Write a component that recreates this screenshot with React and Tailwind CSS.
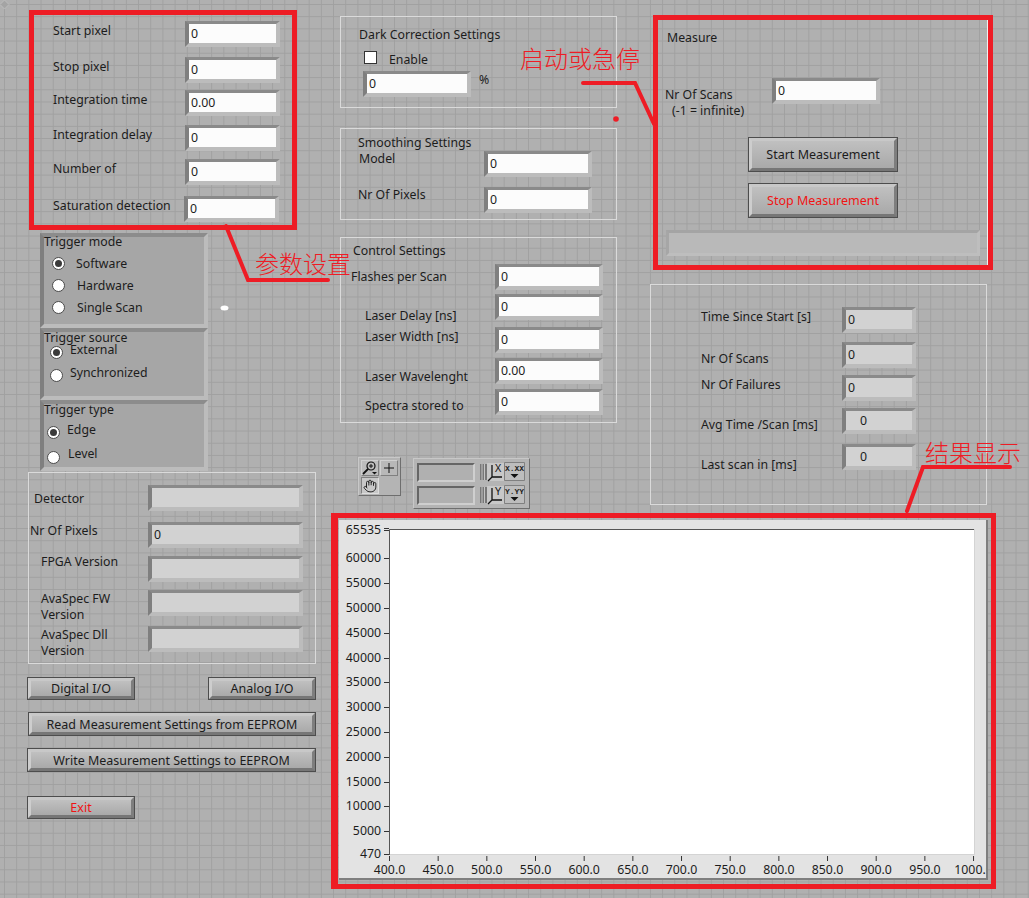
import { Hand } from 'lucide-react';

const text = "text-[12.3px] leading-[16px] text-[#1c1c1c] whitespace-nowrap";

// recessed LabVIEW numeric control, white or grey inside
const Numeric = ({ value, className = '', inner = 'w-[100px]', indicator = false, valueClass = 'pl-[2px]' }) => (
  <div className={`shrink-0 box-content border-t-[3px] border-l-[4px] border-r-[4px] border-b-[4px] border-t-[#8a8a8a] border-l-[#7f7f7f] border-r-[#bcbcbc] border-b-[#bcbcbc] ${className}`}>
    <div className={`h-[19px] ${inner} ${indicator ? 'bg-[#d2d2d2]' : 'bg-[#fcfcfc]'} ${text} ${valueClass} leading-[19px]`}>{value}</div>
  </div>
);

const Field = ({ label, labelClass, rowClass, ...rest }) => (
  <div className={`flex items-start ${rowClass}`}>
    <div className={`${text} shrink-0 ${labelClass}`}>{label}</div>
    <Numeric {...rest} />
  </div>
);

const Radio = ({ on }) => (
  <span className="shrink-0 w-[13px] h-[13px] rounded-full bg-white border-[1.5px] border-[#4a4a4a] flex items-center justify-center">
    {on && <span className="w-[7px] h-[7px] rounded-full bg-[#3a3a3a]" />}
  </span>
);

const RadioRow = ({ on, label, rowClass, labelClass }) => (
  <div className={`flex items-center h-[22px] ${rowClass}`}>
    <Radio on={on} />
    <span className={`${text} ${labelClass}`}>{label}</span>
  </div>
);

const LvButton = ({ children, className = '', red = false }) => (
  <button className={`block box-border border border-[#4d4d4d] bg-[#b4b4b4] ${className}`}>
    <span className={`flex h-full items-center justify-center box-border pt-[2px] border-t-[3px] border-l-[3px] border-r-[3px] border-b-[3px] border-t-[#c8c8c8] border-l-[#cdcdcd] border-r-[#7e7e7e] border-b-[#767676] bg-[linear-gradient(to_bottom,#c0c0c0,#a9a9a9)] text-[12.5px] whitespace-nowrap ${red ? 'text-[#f01414]' : 'text-[#1c1c1c]'}`}>
      {children}
    </span>
  </button>
);

const TriggerPanel = ({ className, children }) => (
  <div className={`ml-[40px] w-[168px] box-border border-[4px] border-t-[#8c8c8c] border-l-[#7f7f7f] border-r-[#bcbcbc] border-b-[#bcbcbc] bg-[#a6a6a6] ${className}`}>
    {children}
  </div>
);

const LegendRow = ({ axis, format, className = '' }) => (
  <div className={`flex items-center ${className}`}>
    <div className="w-[60px] h-[19px] box-border border-2 border-t-[#666666] border-l-[#666666] border-r-[#cfcfcf] border-b-[#cfcfcf] bg-[#b0b0b0]" />
    <svg width="49" height="20" viewBox="0 0 49 20" className="ml-[5px] shrink-0">
      <path d="M0 2h7v16H0z" fill="#777" />
      <path d="M2 2v16M4.500 2v16" stroke="#c4c4c4" />
      <path d="M7 1h17v18H7z" fill="#c8c8c8" />
      <path d="M12 3v12H22M12 15l-4 4" stroke="#111" strokeWidth="1.300" fill="none" />
      <text x="18" y="10" textAnchor="middle" fontFamily="Liberation Sans, sans-serif" fontSize="10" fill="#111">{axis}</text>
      <path d="M24.500 0.500h20v18h-20z" fill="#bdbdbd" stroke="#808080" strokeWidth="1" />
      <text x="34.500" y="9" textAnchor="middle" fontFamily="Liberation Mono, monospace" fontSize="8" fontWeight="700" fill="#222">{format}</text>
      <path d="M30.500 12h8l-4 4z" fill="#111" />
    </svg>
  </div>
);

const yTicks = [
  ['65535', 10], ['60000', 38], ['55000', 63], ['50000', 88], ['45000', 113], ['40000', 138], ['35000', 162],
  ['30000', 187], ['25000', 212], ['20000', 237], ['15000', 262], ['10000', 286], ['5000', 311], ['470', 334],
];
const xTicks = ['400.0', '450.0', '500.0', '550.0', '600.0', '650.0', '700.0', '750.0', '800.0', '850.0', '900.0', '950.0', '1000.0'];

const Chart = () => (
  <svg width="648" height="360" viewBox="0 0 648 360" className="block font-['Noto_Sans']">
    <rect x="50.500" y="9.500" width="585" height="325" fill="#ffffff" stroke="#d4d4d4" />
    <path d="M50.500 9.500V335M50.500 9.500H635" stroke="#555555" fill="none" />
    {yTicks.map(([label, y]) => (
      <g key={label}>
        <text x="42" y={y + 4} textAnchor="end" fontSize="12.300" fill="#1c1c1c">{label}</text>
        <path d={`M45 ${y + 0.500}h5`} stroke="#333" />
      </g>
    ))}
    <path d="M45 8.500h5" stroke="#333" />
    {xTicks.map((label, i) => {
      const x = 50.5 + i * 48.67;
      return (
        <g key={label}>
          <path d={`M${x} 336v5`} stroke="#333" />
          <text x={x} y="354" textAnchor="middle" fontSize="12.300" fill="#1c1c1c">{label}</text>
        </g>
      );
    })}
  </svg>
);

const annotation = "absolute font-['Noto_Sans_CJK_SC'] font-light text-[24px] leading-[28px] text-[#ee1c25] whitespace-nowrap";

export default function App() {
  return (
    <div className="relative w-[1029px] h-[898px] overflow-hidden flex font-['Noto_Sans'] bg-[#b0b0b0] bg-[linear-gradient(to_right,#a0a0a0_1px,transparent_1px),linear-gradient(to_bottom,#a0a0a0_1px,transparent_1px)] bg-[size:12.2px_12.2px] bg-[position:4px_4px]">
      {/* left column */}
      <div className="w-[331px] shrink-0">
        <div className="pt-[21px] pl-[53px] h-[233px]">
          <Field label="Start pixel" value="0" rowClass="h-[36px]" labelClass="w-[132px] mt-[2px]" inner="w-[87px]" />
          <Field label="Stop pixel" value="0" rowClass="h-[33px]" labelClass="w-[132px] mt-[2px]" inner="w-[87px]" />
          <Field label="Integration time" value="0.00" rowClass="h-[35px]" labelClass="w-[132px] mt-[2px]" inner="w-[87px]" />
          <Field label="Integration delay" value="0" rowClass="h-[34px]" labelClass="w-[132px] mt-[2px]" inner="w-[87px]" />
          <Field label="Number of" value="0" rowClass="h-[37px]" labelClass="w-[132px] mt-[2px]" inner="w-[87px]" />
          <Field label="Saturation detection" value="0" rowClass="h-[26px]" labelClass="w-[131px] mt-[2px]" inner="w-[87px]" />
        </div>

        <TriggerPanel className="h-[95px]">
          <div className={`${text} -mt-[3px]`}>Trigger mode</div>
          <RadioRow on label="Software" rowClass="mt-[2px] pl-[8px]" labelClass="ml-[11px] mt-[2px]" />
          <RadioRow label="Hardware" rowClass="pl-[8px]" labelClass="ml-[12px] mt-[2px]" />
          <RadioRow label="Single Scan" rowClass="pl-[8px]" labelClass="ml-[12px] mt-[2px]" />
        </TriggerPanel>
        <TriggerPanel className="h-[72px]">
          <div className={`${text} -mt-[2px]`}>Trigger source</div>
          <RadioRow on label="External" rowClass="-mt-[5px] pl-[6px]" labelClass="ml-[7px] mb-[4px]" />
          <RadioRow label="Synchronized" rowClass="mt-[1px] pl-[6px]" labelClass="ml-[7px] mb-[4px]" />
        </TriggerPanel>
        <TriggerPanel className="h-[71px]">
          <div className={`${text} -mt-[2px]`}>Trigger type</div>
          <RadioRow on label="Edge" rowClass="mt-[3px] pl-[3px]" labelClass="ml-[7px] mb-[4px]" />
          <RadioRow label="Level" rowClass="mt-[3px] pl-[3px]" labelClass="ml-[8px] mb-[6px]" />
        </TriggerPanel>

        <div className="ml-[28px] mt-[1px] w-[288px] h-[192px] box-border border border-[#dadada] pt-[12px]">
          <Field label="Detector" value="" indicator rowClass="h-[37px]" labelClass="w-[119px] pl-[5px] mt-[6px]" inner="w-[147px]" />
          <Field label="Nr Of Pixels" value="0" indicator rowClass="h-[34px]" labelClass="w-[119px] pl-[1px] mt-[1px]" inner="w-[147px]" />
          <Field label="FPGA Version" value="" indicator rowClass="h-[34px]" labelClass="w-[119px] pl-[12px] -mt-[2px]" inner="w-[147px]" />
          <Field label={<>AvaSpec FW<br />Version</>} value="" indicator rowClass="h-[36px]" labelClass="w-[119px] pl-[12px] mt-[1px]" inner="w-[147px]" />
          <Field label={<>AvaSpec Dll<br />Version</>} value="" indicator rowClass="h-[26px]" labelClass="w-[119px] pl-[12px] mt-[1px]" inner="w-[147px]" />
        </div>

        <div className="mt-[13px] ml-[27px] w-[289px] flex justify-between">
          <LvButton className="w-[108px] h-[23px]">Digital I/O</LvButton>
          <LvButton className="w-[108px] h-[23px]">Analog I/O</LvButton>
        </div>
        <LvButton className="mt-[12px] ml-[28px] w-[288px] h-[24px]">Read Measurement Settings from EEPROM</LvButton>
        <LvButton className="mt-[12px] ml-[27px] w-[289px] h-[24px]">Write Measurement Settings to EEPROM</LvButton>
        <LvButton red className="mt-[24px] ml-[27px] w-[108px] h-[23px]">Exit</LvButton>
      </div>

      {/* middle, right and graph */}
      <div className="flex-1 min-w-0">
        <div className="flex h-[520px]">
          <div className="w-[319px] shrink-0 pl-[9px] pt-[16px]">
            <div className="w-[277px] h-[92px] box-border border border-[#dadada] pt-[10px]">
              <div className={`${text} ml-[18px]`}>Dark Correction Settings</div>
              <div className="flex items-start ml-[23px] mt-[8px] h-[17px]">
                <span className="w-[13px] h-[13px] box-border border border-[#333333] bg-white" />
                <span className={`${text} ml-[12px] mt-[1px]`}>Enable</span>
              </div>
              <div className="flex items-start ml-[22px] mt-[3px]">
                <Numeric value="0" />
                <span className={`${text} ml-[8px] mt-[1px]`}>%</span>
              </div>
            </div>
            <div className="mt-[20px] w-[277px] h-[92px] box-border border border-[#dadada] pt-[6px]">
              <div className={`${text} ml-[17px]`}>Smoothing Settings</div>
              <Field label="Model" value="0" rowClass="h-[36px]" labelClass="w-[143px] pl-[18px]" />
              <Field label="Nr Of Pixels" value="0" rowClass="h-[26px]" labelClass="w-[143px] pl-[17px]" />
            </div>
            <div className="mt-[17px] w-[277px] h-[186px] box-border border border-[#dadada] pt-[5px]">
              <div className={`${text} ml-[12px]`}>Control Settings</div>
              <Field label="Flashes per Scan" value="0" rowClass="h-[30px] mt-[5px]" labelClass="w-[154px] pl-[10px] mt-[5px]" />
              <Field label="Laser Delay [ns]" value="0" rowClass="h-[33px]" labelClass="w-[154px] pl-[24px] mt-[14px]" />
              <Field label="Laser Width [ns]" value="0" rowClass="h-[31px]" labelClass="w-[154px] pl-[24px] mt-[2px]" />
              <Field label="Laser Wavelenght" value="0.00" rowClass="h-[31px]" labelClass="w-[154px] pl-[24px] mt-[11px]" />
              <Field label="Spectra stored to" value="0" rowClass="h-[26px]" labelClass="w-[154px] pl-[24px] mt-[9px]" />
            </div>

            <div className="flex items-start ml-[18px] mt-[34px]">
              {/* graph palette */}
              <div className="w-[43px] h-[39px] box-border border border-t-[#c8c8c8] border-l-[#c8c8c8] border-r-[#6e6e6e] border-b-[#6e6e6e] bg-[#b4b4b4] pl-[2px] pt-[2px]">
                <div className="flex gap-[1px]">
                  <div className="w-[18px] h-[16px] bg-[#bdbdbd] border border-t-[#d0d0d0] border-l-[#d0d0d0] border-r-[#808080] border-b-[#808080]">
                    <svg width="16" height="14" viewBox="0 0 16 14">
                      <circle cx="9" cy="5" r="4" fill="none" stroke="#111" strokeWidth="1.200" />
                      <path d="M9 3v4M7 5h4" stroke="#111" />
                      <path d="M6 8l-5 5" stroke="#111" strokeWidth="1.800" />
                      <path d="M10 11h5l-2.500 2.500z" fill="#111" />
                    </svg>
                  </div>
                  <div className="w-[18px] h-[16px] flex items-center justify-center bg-[#b8b8b8] border border-t-[#d0d0d0] border-l-[#d0d0d0] border-r-[#808080] border-b-[#808080]">
                    <svg width="12" height="12" viewBox="0 0 12 12"><path d="M6 1v10M1 6h10" stroke="#111" /></svg>
                  </div>
                </div>
                <div className="mt-[1px] w-[18px] h-[17px] flex items-center justify-center bg-[#c8c8c8] border border-t-[#808080] border-l-[#808080] border-r-[#dddddd] border-b-[#dddddd]">
                  <Hand size={14} strokeWidth={1.500} color="#111" />
                </div>
              </div>
              {/* cursor legend */}
              <div className="ml-[12px] mt-[1px] w-[117px] h-[51px] box-border border border-t-[#c8c8c8] border-l-[#c8c8c8] border-r-[#6e6e6e] border-b-[#6e6e6e] bg-[#b4b4b4] pl-[3px] pt-[3px]">
                <LegendRow axis="X" format="X.XX" />
                <LegendRow axis="Y" format="Y.YY" className="mt-[3px]" />
              </div>
            </div>
          </div>

          <div className="w-[379px] shrink-0">
            <div className="h-[284px] pt-[30px]">
              <div className={`${text} ml-[17px]`}>Measure</div>
              <div className="flex items-start ml-[15px] mt-[32px] h-[26px]">
                <div className={`${text} w-[107px] mt-[9px]`}>Nr Of Scans<br /><span className="pl-[7px]">(-1 = infinite)</span></div>
                <Numeric value="0" />
              </div>
              <LvButton className="mt-[33px] ml-[98px] w-[150px] h-[35px]">Start Measurement</LvButton>
              <LvButton red className="mt-[11px] ml-[98px] w-[150px] h-[35px]">Stop Measurement</LvButton>
              <div className="mt-[12px] ml-[16px] w-[314px] h-[26px] box-border border-[3px] border-t-[#a4a4a4] border-l-[#a6a6a6] border-r-[#bebebe] border-b-[#bebebe] bg-[#b9b9b9]" />
            </div>
            <div className="w-[337px] h-[221px] box-border border border-[#dadada] pt-[22px]">
              <Field label="Time Since Start [s]" value="0" indicator rowClass="h-[35px]" labelClass="w-[191px] pl-[50px] mt-[2px]" inner="w-[66px]" />
              <Field label="Nr Of Scans" value="0" indicator rowClass="h-[33px]" labelClass="w-[191px] pl-[50px] mt-[9px]" inner="w-[66px]" />
              <Field label="Nr Of Failures" value="0" indicator rowClass="h-[33px]" labelClass="w-[191px] pl-[50px] mt-[2px]" inner="w-[66px]" />
              <Field label="Avg Time /Scan [ms]" value="0" indicator rowClass="h-[36px]" labelClass="w-[191px] pl-[50px] mt-[9px]" inner="w-[66px]" valueClass="pl-[14px]" />
              <Field label="Last scan in [ms]" value="0" indicator rowClass="h-[26px]" labelClass="w-[191px] pl-[50px] mt-[13px]" inner="w-[66px]" valueClass="pl-[14px]" />
            </div>
          </div>
        </div>

        <div className="ml-[8px] w-[649px] h-[360px] box-border border-r-2 border-b-2 border-r-[#7f7f7f] border-b-[#7f7f7f] bg-[#e3e3e3] overflow-hidden">
          <Chart />
        </div>
      </div>

      {/* red annotations drawn over the panel */}
      <div className="absolute left-[29px] top-[10px] w-[268px] h-[220px] box-border border-[5px] border-[#ee1c25]" />
      <div className="absolute left-[653px] top-[15px] w-[340px] h-[255px] box-border border-[5px] border-[#ee1c25]" />
      <div className="absolute left-[331px] top-[513px] w-[665px] h-[376px] box-border border-[5px] border-l-[7px] border-[#ee1c25]" />
      <div className={`${annotation} left-[255px] top-[249px]`}>参数设置</div>
      <div className={`${annotation} left-[520px] top-[44px]`}>启动或急停</div>
      <div className={`${annotation} left-[925px] top-[438px]`}>结果显示</div>
      <svg width="1029" height="898" viewBox="0 0 1029 898" className="absolute left-0 top-0 pointer-events-none">
        <path d="M987.500 20V265" stroke="#f0f0f0" />
        <g fill="none" stroke="#ee1c25" strokeWidth="4" strokeLinecap="round" strokeLinejoin="miter">
          <path d="M226 226L248 280H328" />
          <path d="M583 83H635L654 124" />
          <path d="M1010 467H923L907 511" />
        </g>
        <circle cx="616" cy="119" r="2.800" fill="#ee1c25" />
        <ellipse cx="224.500" cy="308" rx="4" ry="2.500" fill="#ffffff" />
        <path d="M4.500 0L9 4.500L4.500 9L0 4.500Z" fill="#a4a4a4" stroke="#bcbcbc" />
      </svg>
    </div>
  );
}
